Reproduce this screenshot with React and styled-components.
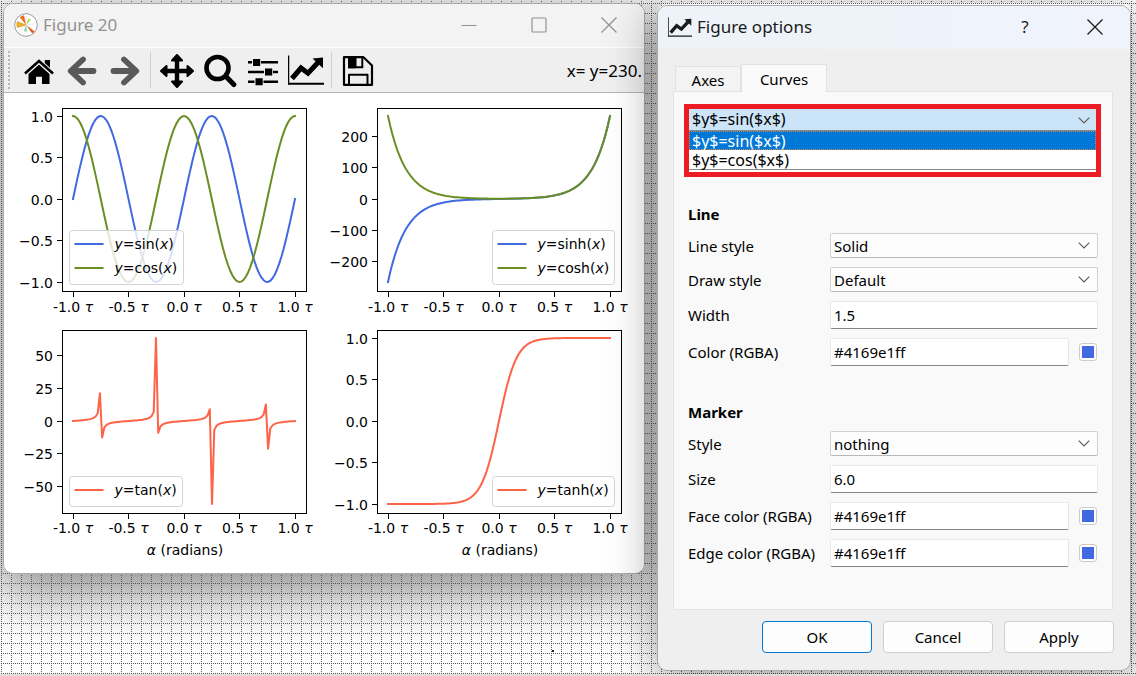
import React from "react";
import styled, { createGlobalStyle, css } from "styled-components";

const GlobalStyle = createGlobalStyle`
  *, *::before, *::after { box-sizing: border-box; }
  body {
    margin: 0;
    color: #000;
    background: #fff;
    font-family: "Noto Sans", "Open Sans", sans-serif;
    font-size: 15px;
    line-height: 20px;
  }
  button, input, select { font: inherit; color: inherit; }
`;

/* ---------- desktop ---------- */

const dot = "conic-gradient(from 270deg at 1px 1px, #555 90deg, transparent 0)";

const Desktop = styled.div`
  display: flex;
  flex-direction: column;
  min-height: 100vh;
  overflow: hidden;
`;

const Workspace = styled.main`
  flex: 1;
  display: grid;
  grid-template-columns: minmax(0, 642fr) minmax(0, 474fr);
  align-items: start;
  gap: 12px;
  padding: 3px 5px 3px 3px;
  isolation: isolate;
  background:
    linear-gradient(#222, #222) 552px 650px / 2px 2px no-repeat,
    #fff;
  position: relative;

  &::after {
    content: "";
    position: absolute;
    inset: 0;
    z-index: 1;
    pointer-events: none;
    background:
      ${dot} 1px 1px / 10px 2px,
      ${dot} 1px 3px / 2px 10px;
  }
`;

const Strip = styled.div`
  position: relative;
  height: 3px;
  background: #dedede;
`;

const Window = styled.section`
  position: relative;
  grid-area: 1 / ${(p) => p.$column};
  border: 1px solid #a9a9a9;
  border-radius: 10px;
  overflow: hidden;
`;

const FigureWindow = styled(Window)`
  z-index: 2;
  background: #fff;
`;

const DialogWindow = styled(Window)`
  z-index: 4;
  margin-top: 2px;
  background: #efefef;
`;

const Shade = styled.div`
  grid-area: 1 / ${(p) => p.$column};
  align-self: stretch;
  border-radius: 10px;
  z-index: ${(p) => p.$level};
  pointer-events: none;
  position: relative;
  margin-bottom: ${(p) => p.$bottom}px;
  box-shadow: ${(p) => p.$shadow};
`;

/* ---------- title bars ---------- */

const TitleBar = styled.header`
  display: flex;
  align-items: center;
  height: 43px;
  padding: 0 0 2px 10px;
  background: ${(p) => (p.$active ? "linear-gradient(90deg, #edf3f8, #f0f3fc)" : "#f3f3f3")};
  color: ${(p) => (p.$active ? "#1b1b1b" : "#929292")};
`;

const Title = styled.h1`
  flex: 1;
  margin: 0 0 0 5px;
  font-size: 17px;
  font-weight: 400;
  line-height: 24px;
`;

const CaptionButton = styled.button`
  display: grid;
  place-items: center;
  width: 70px;
  height: 41px;
  padding: 0;
  border: 0;
  background: none;
  font-size: 17px;
`;

/* ---------- toolbar ---------- */

const Toolbar = styled.div`
  display: flex;
  align-items: center;
  height: 46px;
  padding: 0 2px 0 4px;
  border-top: 1px solid #fff;
  border-bottom: 1px solid #b4b4b4;
  background: #efefef;
`;

const Handle = styled.span`
  width: 2px;
  height: 38px;
  margin-right: 7px;
  background: repeating-linear-gradient(#b5b5b5 0 2px, transparent 2px 4px);
`;

const ToolButton = styled.button`
  display: grid;
  place-items: center;
  width: 43px;
  height: 42px;
  padding: 0;
  border: 0;
  background: none;
  color: ${(p) => (p.disabled ? "#595959" : "#000")};
`;

const Separator = styled.span`
  width: 1px;
  height: 36px;
  margin: 0 4px;
  background: #cfcfcf;
`;

const Coordinates = styled.output`
  margin-left: auto;
  padding-top: 2px;
  font-size: 17px;
  white-space: nowrap;
`;

/* ---------- plots ---------- */

const Canvas = styled.div`
  display: grid;
  grid-template-columns: minmax(0, 1fr) minmax(0, 1fr);
  padding: 0 9px 0 1px;
`;

const Plot = styled.svg`
  display: block;
  width: 100%;
  height: auto;
  font-family: "DejaVu Sans", sans-serif;
  font-size: 14px;
`;

const BLUE = "#4169e1";
const GREEN = "#6b8e23";
const RED = "#ff6347";
const SAMPLES = Array.from({ length: 100 }, (_, i) => -2 * Math.PI + (4 * Math.PI * i) / 99);

const AXES = { left: 57.5, top: 15.5, width: 244, height: 183, cx: 179, cy: 106 };

function curve(fn, scale) {
  return SAMPLES.map((x) => {
    const px = AXES.cx + (x / (2 * Math.PI)) * 111;
    const py = AXES.cy - fn(x) * scale;
    return `${px.toFixed(2)},${py.toFixed(2)}`;
  }).join(" ");
}

function Subplot({ label, limit, ticks, format, curves, legend, xlabel }) {
  const scale = 83 / limit;
  const legendHeight = curves.length === 2 ? 54 : 30;
  const legendTop = AXES.top + AXES.height - 7 - legendHeight;
  const height = xlabel ? 258 : 222;
  return (
    <Plot viewBox={`0 0 315 ${height}`} role="img" aria-label={label}>
      {curves.map((c) => (
        <polyline key={c.name} points={curve(c.fn, scale)} fill="none" stroke={c.color} strokeWidth="2" strokeLinejoin="round" strokeLinecap="square" />
      ))}
      <rect x={AXES.left} y={AXES.top} width={AXES.width} height={AXES.height} fill="none" stroke="#000" />
      {[-1, -0.5, 0, 0.5, 1].map((t) => {
        const x = Math.round(AXES.cx + t * 111 - 0.5) + 0.5;
        return (
          <g key={t}>
            <line x1={x} x2={x} y1="199" y2="204" stroke="#000" />
            <text x={AXES.cx + t * 111} y={xlabel ? 218 : 219} textAnchor="middle">
              {t.toFixed(1)} <tspan fontStyle="italic">τ</tspan>
            </text>
          </g>
        );
      })}
      {ticks.map((t) => {
        const y = Math.round(AXES.cy - t * scale - 0.5) + 0.5;
        return (
          <g key={t}>
            <line x1="52" x2="57" y1={y} y2={y} stroke="#000" />
            <text x="48" y={y + 5} textAnchor="end">
              {(t < 0 ? "−" : "") + format(Math.abs(t))}
            </text>
          </g>
        );
      })}
      <rect x={legend.x} y={legendTop} width={legend.width} height={legendHeight} rx="3" fill="#fff" fillOpacity="0.8" stroke="#d3d3d3" />
      {curves.map((c, i) => (
        <g key={c.name}>
          <line x1={legend.x + 5} x2={legend.x + 34} y1={legendTop + 13.5 + i * 24} y2={legendTop + 13.5 + i * 24} stroke={c.color} strokeWidth="2" />
          <text x={legend.x + 45} y={legendTop + 18 + i * 24}>
            <tspan fontStyle="italic">y</tspan>={c.name}(<tspan fontStyle="italic">x</tspan>)
          </text>
        </g>
      ))}
      {xlabel && (
        <text x={AXES.cx + 1} y="240" textAnchor="middle">
          <tspan fontStyle="italic">α</tspan> (radians)
        </text>
      )}
    </Plot>
  );
}

/* ---------- icons ---------- */

const ToolIcon = ({ children }) => (
  <svg width="36" height="36" viewBox="0 0 36 36" aria-hidden="true" fill="none" stroke="currentColor">
    {children}
  </svg>
);

const HomeIcon = () => (
  <ToolIcon>
    <path d="M23.7 8h5.3v10l-5.3-5z" fill="currentColor" stroke="none" />
    <path d="M18 12.5 28.5 22v10H21v-7.3h-6V32H7.500V22z" fill="currentColor" stroke="none" />
    <path d="M4 21.500 18 9l14 12.500" stroke="#efefef" strokeWidth="4.600" />
    <path d="M4 21.500 18 9l14 12.500" strokeWidth="2.600" />
  </ToolIcon>
);

const ArrowPath = () => <path d="M19 7.500 6.700 19 19 30.500M8 19h21.500" strokeWidth="5.800" strokeLinecap="round" strokeLinejoin="round" />;

const BackIcon = () => (
  <ToolIcon><ArrowPath /></ToolIcon>
);

const ForwardIcon = () => (
  <ToolIcon><g transform="matrix(-1 0 0 1 36 0)"><ArrowPath /></g></ToolIcon>
);

const PanIcon = () => (
  <ToolIcon>
    <path d="M18 5v28M4 19h28" strokeWidth="4.400" />
    <path
      d="M18 3l5 5.500H13zM18 35l5-5.500H13zM2 19l5.500 5V14zM34 19l-5.500 5V14z"
      fill="currentColor"
      strokeWidth="2"
      strokeLinejoin="round"
    />
  </ToolIcon>
);

const ZoomIcon = () => (
  <ToolIcon>
    <circle cx="15.500" cy="16" r="11" strokeWidth="4.600" />
    <path d="M24 24.500l7.800 8" strokeWidth="5" strokeLinecap="round" />
  </ToolIcon>
);

const SlidersIcon = () => (
  <ToolIcon>
    <path d="M3 10.300h30M3 20h30M3 29.700h30" strokeWidth="2.600" />
    <path d="M7 5.800h9v9H7zM19 15.500h9v9h-9zM9.500 25.200h9v9h-9z" fill="#efefef" stroke="none" />
    <path d="M8 7h7.200v7H8zM20 16.500h7.200v7H20zM10.500 26.200h7.200v7h-7.200z" fill="currentColor" stroke="none" />
  </ToolIcon>
);

const ChartShape = () => (
  <>
    <path d="M.6 3.500v29" strokeWidth="1.300" />
    <path d="M0 31.700h36" strokeWidth="2" />
    <path d="M4 26.500 13 16l7 5.200L30 10.500" strokeWidth="5" />
    <path d="M24.500 6.500 35 5.500v10.800z" fill="currentColor" stroke="none" />
  </>
);

const ChartIcon = () => (
  <ToolIcon><ChartShape /></ToolIcon>
);

const SaveIcon = () => (
  <ToolIcon>
    <path d="M4 5.200h19.500l8.500 8.300v19.300H4z" strokeWidth="2.200" strokeLinejoin="round" />
    <path d="M8 5h7.500v11.300H8z" fill="currentColor" stroke="none" />
    <path d="M9 6v9.200h13.300V6M15.500 6v9" strokeWidth="2" />
    <path d="M9 32.500V22.800h18.500v9.700" strokeWidth="2" strokeLinejoin="round" />
  </ToolIcon>
);

const LogoIcon = () => (
  <svg width="24" height="24" viewBox="0 0 24 24" aria-hidden="true">
    <circle cx="12" cy="12" r="11.300" fill="#fff" stroke="#9b9b9b" />
    <path d="M12 12 5.800 4.200A10 10 0 0 1 10 2.200z" fill="#f26a1b" />
    <path d="M12 12 3.300 14.500A9 9 0 0 1 3.300 8.500z" fill="#f0b020" stroke="#c98a1c" strokeWidth=".5" />
    <path d="M12 12 14.300 5.200l2.700 1.600z" fill="#b4e05a" />
    <path d="M12 12 20.500 18.300 18.300 20.500z" fill="#e85a1a" />
    <path d="M12 12 9.800 18.200l3.400.3z" fill="#7bdc8c" />
    <path d="M12 12 5 18M12 12l8-1M12 3v18" stroke="#c4cdd2" strokeWidth=".4" />
  </svg>
);

const CloseIcon = () => (
  <svg width="16" height="16" viewBox="0 0 16 16" stroke="currentColor" strokeWidth="1.300" aria-hidden="true">
    <path d="M.5.5l15 15M15.500.5l-15 15" />
  </svg>
);

/* ---------- options dialog ---------- */

const Form = styled.form`
  padding: 15px 17px 17px 15px;
`;

const Tabs = styled.div`
  display: flex;
  align-items: flex-end;
  padding-left: 2px;
`;

const Tab = styled.button`
  position: relative;
  width: ${(p) => (p.$selected ? 86 : 66)}px;
  height: ${(p) => (p.$selected ? 28 : 25)}px;
  margin-bottom: ${(p) => (p.$selected ? -1 : 0)}px;
  padding: ${(p) => (p.$selected ? 0 : 2)}px 0 0;
  border: 1px solid #e2e2e2;
  border-bottom: 0;
  background: ${(p) => (p.$selected ? "#f9f9f9" : "#f3f3f3")};
`;

const Panel = styled.div`
  padding: 12px 11px 42px 10px;
  border: 1px solid #e3e3e3;
  background: #f9f9f9;
`;

const Highlight = styled.div`
  border: 5px solid #ed1c24;
  background: #fff;
  font-size: 16px;
`;

const SelectBox = styled.div`
  flex: 1;
  min-width: 0;
  display: grid;
  align-items: center;

  svg {
    grid-area: 1 / 1;
    justify-self: end;
    margin-right: ${(p) => (p.$open ? 6 : 8)}px;
    pointer-events: none;
  }
`;

const Select = styled.select`
  grid-area: 1 / 1;
  appearance: none;
  width: 100%;
  height: 25px;
  padding: 0 24px 0 3px;
  border: 1px solid #d0d0d0;
  border-bottom-color: #b8b8b8;
  border-radius: 2px;
  background: #fdfdfd;
  outline: 0;

  ${(p) =>
    p.$open &&
    css`
      height: 22px;
      padding-bottom: 2px;
      border: 0;
      border-bottom: 1px solid #8a8a8a;
      border-radius: 0;
      background: #cce4f7;
    `}
`;

const Options = styled.ul`
  margin: 0;
  padding: 0 0 2px;
  list-style: none;
`;

const Option = styled.li`
  height: ${(p) => (p.$selected ? 19 : 20)}px;
  padding: 1px 3px 0;
  line-height: 19px;
  color: ${(p) => (p.$selected ? "#fff" : "#000")};
  background: ${(p) => (p.$selected ? "#0078d7" : "#fff")};
  outline: ${(p) => (p.$selected ? "1px dotted #d98b4a" : "0")};
  outline-offset: -1px;
  border-bottom: ${(p) => (p.$selected ? "0" : "1px solid #8c8c8c")};
`;

const Group = styled.fieldset`
  display: flex;
  flex-direction: column;
  gap: 9px;
  margin: ${(p) => p.$space}px 0 0;
  padding: 0 3px 0 4px;
  border: 0;
  min-width: 0;
`;

const GroupTitle = styled.h2`
  margin: 0;
  font-size: 15px;
  line-height: 20px;
`;

const Row = styled.div`
  display: flex;
  align-items: center;
`;

const Label = styled.label`
  flex: 0 0 142px;
  white-space: nowrap;
`;

const TextInput = styled.input`
  flex: 1;
  min-width: 0;
  height: 28px;
  padding: 0 3px;
  border: 1px solid #e8e8e8;
  border-bottom-color: #868686;
  border-radius: 2px;
  background: #fff;
  outline: 0;
`;

const Swatch = styled.button`
  display: block;
  width: 18px;
  height: 18px;
  margin: 0 1px 0 10px;
  padding: 2px;
  border: 1px solid #cbcbcb;
  border-radius: 3px;
  background: #4169e1 content-box;
  box-shadow: inset 0 0 0 2px #fdfdfd;
`;

const Actions = styled.div`
  display: flex;
  justify-content: flex-end;
  gap: 11px;
  margin: 11px -1px 0 0;
`;

const ActionButton = styled.button`
  width: 110px;
  height: 32px;
  padding: 0;
  border: 1px solid ${(p) => (p.$primary ? "#0078d4" : "#cfcfcf")};
  border-radius: 4px;
  background: #fdfdfd;
`;

const Chevron = () => (
  <svg width="12" height="7" viewBox="0 0 12 7" fill="none" stroke="#5c5c5c" strokeWidth="1.200" aria-hidden="true">
    <path d="M.7.7 6 6 11.300.7" />
  </svg>
);

function SelectRow({ id, label, value }) {
  return (
    <Row>
      <Label htmlFor={id}>{label}</Label>
      <SelectBox>
        <Select id={id} defaultValue={value}>
          <option>{value}</option>
        </Select>
        <Chevron />
      </SelectBox>
    </Row>
  );
}

function InputRow({ id, label, value, color }) {
  return (
    <Row>
      <Label htmlFor={id}>{label}</Label>
      <TextInput id={id} defaultValue={value} />
      {color && <Swatch type="button" aria-label={`Pick ${label}`} />}
    </Row>
  );
}

const oneDecimal = (v) => v.toFixed(1);
const integer = (v) => String(v);

export default function App() {
  return (
    <Desktop>
      <GlobalStyle />
      <Workspace>
        <FigureWindow $column={1} aria-label="Figure 20">
          <TitleBar>
            <LogoIcon />
            <Title>Figure 20</Title>
            <CaptionButton aria-label="Minimize">
              <svg width="16" height="16" viewBox="0 0 16 16" stroke="currentColor" aria-hidden="true"><path d="M.5 8.500h15" /></svg>
            </CaptionButton>
            <CaptionButton aria-label="Maximize">
              <svg width="16" height="16" viewBox="0 0 16 16" fill="none" stroke="currentColor" strokeWidth="1.200" aria-hidden="true">
                <rect x="1" y="1" width="14" height="14" rx="1" />
              </svg>
            </CaptionButton>
            <CaptionButton aria-label="Close"><CloseIcon /></CaptionButton>
          </TitleBar>
          <Toolbar role="toolbar">
            <Handle />
            <ToolButton aria-label="Home"><HomeIcon /></ToolButton>
            <ToolButton aria-label="Back" disabled><BackIcon /></ToolButton>
            <ToolButton aria-label="Forward" disabled><ForwardIcon /></ToolButton>
            <Separator />
            <ToolButton aria-label="Pan"><PanIcon /></ToolButton>
            <ToolButton aria-label="Zoom"><ZoomIcon /></ToolButton>
            <ToolButton aria-label="Subplots"><SlidersIcon /></ToolButton>
            <ToolButton aria-label="Customize"><ChartIcon /></ToolButton>
            <Separator />
            <ToolButton aria-label="Save"><SaveIcon /></ToolButton>
            <Coordinates>x= y=230.</Coordinates>
          </Toolbar>
          <Canvas>
            <Subplot
              label="Sine and cosine"
              limit={1}
              ticks={[1, 0.5, 0, -0.5, -1]}
              format={oneDecimal}
              legend={{ x: 64.5, width: 114 }}
              curves={[
                { name: "sin", fn: Math.sin, color: BLUE },
                { name: "cos", fn: Math.cos, color: GREEN },
              ]}
            />
            <Subplot
              label="Hyperbolic sine and cosine"
              limit={267.7}
              ticks={[200, 100, 0, -100, -200]}
              format={integer}
              legend={{ x: 172.5, width: 122 }}
              curves={[
                { name: "sinh", fn: Math.sinh, color: BLUE },
                { name: "cosh", fn: Math.cosh, color: GREEN },
              ]}
            />
            <Subplot
              label="Tangent"
              limit={63}
              ticks={[50, 25, 0, -25, -50]}
              format={integer}
              legend={{ x: 64.5, width: 113 }}
              curves={[{ name: "tan", fn: Math.tan, color: RED }]}
              xlabel
            />
            <Subplot
              label="Hyperbolic tangent"
              limit={1}
              ticks={[1, 0.5, 0, -0.5, -1]}
              format={oneDecimal}
              legend={{ x: 172.5, width: 122 }}
              curves={[{ name: "tanh", fn: Math.tanh, color: RED }]}
              xlabel
            />
          </Canvas>
        </FigureWindow>

        <Shade $column={1} $level={0} $bottom={97} $shadow="0 14px 56px 6px rgba(0,0,0,.45)" />
        <Shade $column={2} $level={3} $bottom={0} $shadow="0 8px 48px rgba(0,0,0,.42)" />

        <DialogWindow $column={2} aria-label="Figure options">
          <TitleBar $active>
            <svg width="24" height="24" viewBox="0 0 36 36" fill="none" stroke="currentColor" aria-hidden="true"><ChartShape /></svg>
            <Title>Figure options</Title>
            <CaptionButton aria-label="Help">?</CaptionButton>
            <CaptionButton aria-label="Close"><CloseIcon /></CaptionButton>
          </TitleBar>
          <Form onSubmit={(e) => e.preventDefault()}>
            <Tabs role="tablist">
              <Tab type="button" role="tab">Axes</Tab>
              <Tab type="button" role="tab" aria-selected="true" $selected>Curves</Tab>
            </Tabs>
            <Panel>
              <Highlight>
                <SelectBox $open>
                  <Select $open aria-label="Curve" defaultValue="$y$=sin($x$)">
                    <option>$y$=sin($x$)</option>
                    <option>$y$=cos($x$)</option>
                  </Select>
                  <Chevron />
                </SelectBox>
                <Options role="listbox" aria-label="Curves">
                  <Option role="option" aria-selected="true" $selected>$y$=sin($x$)</Option>
                  <Option role="option">$y$=cos($x$)</Option>
                </Options>
              </Highlight>
              <Group $space={27}>
                <GroupTitle>Line</GroupTitle>
                <SelectRow id="line-style" label="Line style" value="Solid" />
                <SelectRow id="draw-style" label="Draw style" value="Default" />
                <InputRow id="width" label="Width" value="1.5" />
                <InputRow id="color" label="Color (RGBA)" value="#4169e1ff" color />
              </Group>
              <Group $space={36}>
                <GroupTitle>Marker</GroupTitle>
                <SelectRow id="marker-style" label="Style" value="nothing" />
                <InputRow id="size" label="Size" value="6.0" />
                <InputRow id="face" label="Face color (RGBA)" value="#4169e1ff" color />
                <InputRow id="edge" label="Edge color (RGBA)" value="#4169e1ff" color />
              </Group>
            </Panel>
            <Actions>
              <ActionButton type="submit" $primary>OK</ActionButton>
              <ActionButton type="button">Cancel</ActionButton>
              <ActionButton type="button">Apply</ActionButton>
            </Actions>
          </Form>
        </DialogWindow>
      </Workspace>
      <Strip />
    </Desktop>
  );
}
